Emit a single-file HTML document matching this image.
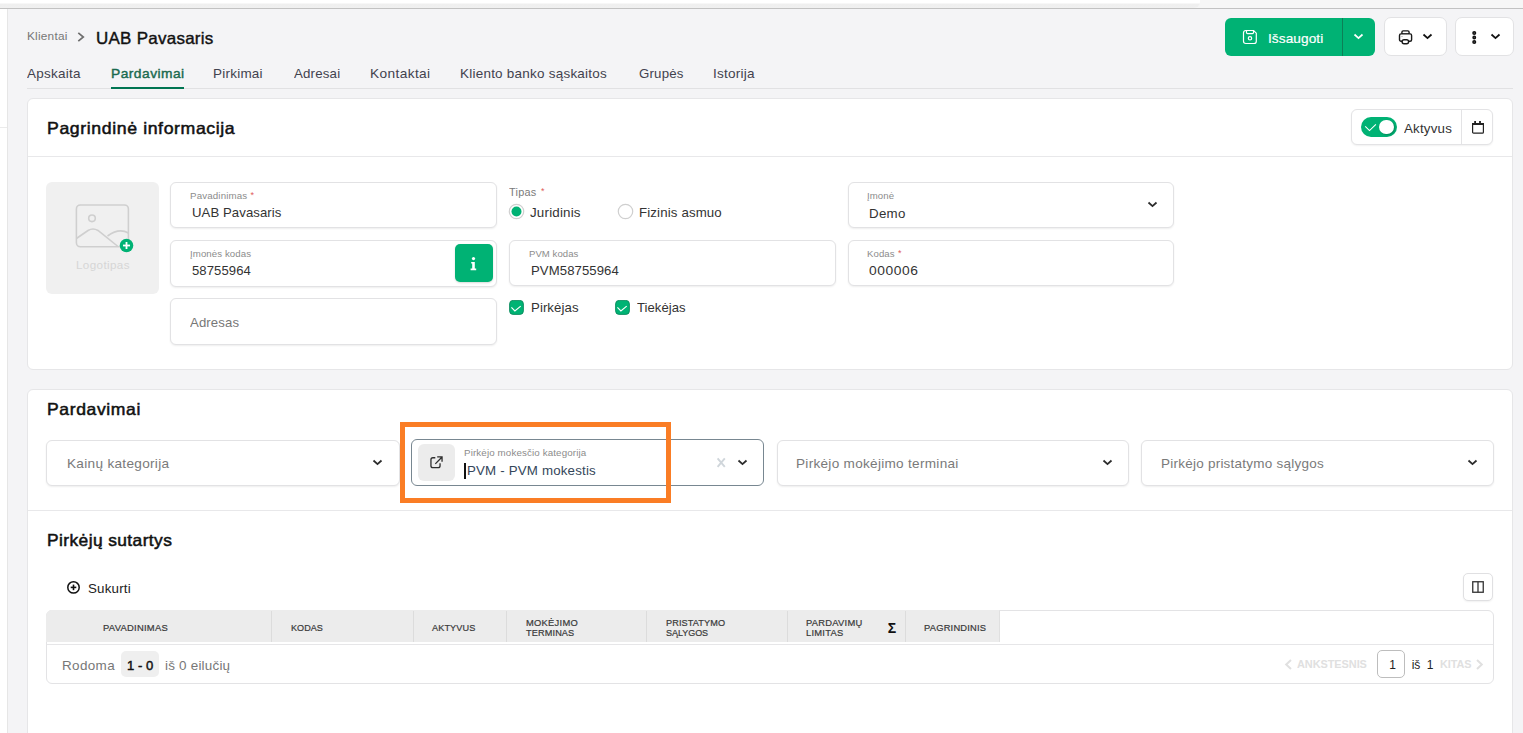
<!DOCTYPE html>
<html><head><meta charset="utf-8"><style>
html,body{margin:0;padding:0;}
body{width:1523px;height:733px;overflow:hidden;position:relative;background:#f4f4f6;font-family:"Liberation Sans", sans-serif;}
.t{position:absolute;white-space:nowrap;}
.b{position:absolute;}
</style></head><body>
<div class="b" style="left:0px;top:0px;width:1523px;height:8px;background:#f6f6f6;"></div>
<div class="b" style="left:0px;top:0px;width:1200px;height:8px;background:linear-gradient(#ffffff 0,#ffffff 3px,#efefef 4px,#f0f0f0 8px);border-bottom-right-radius:6px;"></div>
<div class="b" style="left:0px;top:8px;width:1523px;height:1px;background:#c2c2c2;"></div>
<div class="b" style="left:0px;top:9px;width:7px;height:724px;background:#ffffff;"></div>
<div class="b" style="left:7px;top:9px;width:1px;height:724px;background:#e6e6e6;"></div>
<div class="b" style="left:0px;top:127px;width:7px;height:1px;background:#ebebeb;"></div>
<div class="t" style="left:26.60px;top:31.35px;font-size:11.4px;line-height:11.4px;color:#777;letter-spacing:0.207px;transform:scaleX(1.0388);transform-origin:0 0;">Klientai</div>
<svg class="b" style="left:76px;top:31px;" width="10" height="12" viewBox="0 0 10 12"><polyline points="2.3,1.8 7.3,6 2.3,10.2" fill="none" stroke="#6e6e6e" stroke-width="1.7"/></svg>
<div class="t" style="left:96.10px;top:29.63px;font-size:16.5px;line-height:16.5px;color:#111;letter-spacing:0.260px;transform:scaleX(1.0282);transform-origin:0 0;-webkit-text-stroke:0.4px #111;">UAB Pavasaris</div>
<div class="t" style="left:26.80px;top:67.00px;font-size:13px;line-height:13px;color:#42424e;letter-spacing:0.257px;transform:scaleX(1.0361);transform-origin:0 0;">Apskaita</div>
<div class="t" style="left:111.00px;top:67.00px;font-size:13px;line-height:13px;color:#1a6a4f;letter-spacing:0.439px;transform:scaleX(1.0608);transform-origin:0 0;-webkit-text-stroke:0.4px #1a6a4f;">Pardavimai</div>
<div class="t" style="left:213.00px;top:67.00px;font-size:13px;line-height:13px;color:#42424e;letter-spacing:0.236px;transform:scaleX(1.0357);transform-origin:0 0;">Pirkimai</div>
<div class="t" style="left:293.90px;top:67.00px;font-size:13px;line-height:13px;color:#42424e;letter-spacing:0.167px;transform:scaleX(1.0227);transform-origin:0 0;">Adresai</div>
<div class="t" style="left:370.00px;top:67.00px;font-size:13px;line-height:13px;color:#42424e;letter-spacing:0.362px;transform:scaleX(1.0535);transform-origin:0 0;">Kontaktai</div>
<div class="t" style="left:460.40px;top:67.00px;font-size:13px;line-height:13px;color:#42424e;letter-spacing:0.227px;transform:scaleX(1.0366);transform-origin:0 0;">Kliento banko sąskaitos</div>
<div class="t" style="left:639.00px;top:67.00px;font-size:13px;line-height:13px;color:#42424e;letter-spacing:0.175px;transform:scaleX(1.0205);transform-origin:0 0;">Grupės</div>
<div class="t" style="left:712.80px;top:67.00px;font-size:13px;line-height:13px;color:#42424e;letter-spacing:0.236px;transform:scaleX(1.0431);transform-origin:0 0;">Istorija</div>
<div class="b" style="left:27px;top:88px;width:1486px;height:1px;background:#e1e1e3;"></div>
<div class="b" style="left:111px;top:87px;width:73px;height:2px;background:#007552;"></div>
<div class="b" style="left:1225px;top:18px;width:150px;height:38px;background:#00b274;border-radius:6px;"></div>
<div class="b" style="left:1342px;top:18px;width:1px;height:38px;background:#0d7f57;"></div>
<svg class="b" style="left:1242px;top:29px;" width="16" height="16" viewBox="0 0 16 16"><path d="M3.8 1.5 H11.6 L14.3 4.2 V12.2 Q14.3 14.5 12 14.5 H3.8 Q1.5 14.5 1.5 12.2 V3.8 Q1.5 1.5 3.8 1.5 Z" fill="none" stroke="#fff" stroke-width="1.2"/><path d="M4.5 1.5 V3.5 Q4.5 4.6 5.6 4.6 H10.4 Q11.5 4.6 11.5 3.5 V1.5" fill="none" stroke="#fff" stroke-width="1.2"/><circle cx="8" cy="9.3" r="1.7" fill="none" stroke="#fff" stroke-width="1.2"/></svg>
<div class="t" style="left:1268.30px;top:31.57px;font-size:13.5px;line-height:13.5px;color:#ffffff;letter-spacing:0.072px;transform:scaleX(1.0106);transform-origin:0 0;-webkit-text-stroke:0.2px #fff;">Išsaugoti</div>
<svg class="b" style="left:1353px;top:33px;" width="11" height="8" viewBox="0 0 11 8"><polyline points="1.5,1.5 5.5,5.1 9.5,1.5" fill="none" stroke="#fff" stroke-width="1.7"/></svg>
<div class="b" style="left:1383.5px;top:17.3px;width:63px;height:39.2px;background:#fff;border:1px solid #e2e2e4;border-radius:7px;box-sizing:border-box;"></div>
<svg class="b" style="left:1398px;top:29px;" width="16" height="17" viewBox="0 0 16 17"><rect x="3.9" y="1.9" width="7.2" height="3.4" rx="1.3" fill="none" stroke="#1a1a1a" stroke-width="1.4"/><rect x="1.5" y="4.9" width="12.1" height="7.3" rx="1.5" fill="#fff" stroke="#1a1a1a" stroke-width="1.4"/><rect x="4.1" y="10.7" width="6.5" height="4.1" rx="2" fill="#fff" stroke="#1a1a1a" stroke-width="1.4"/><circle cx="4" cy="7.5" r="0.6" fill="#999"/></svg>
<svg class="b" style="left:1422.3px;top:33px;" width="11" height="8" viewBox="0 0 11 8"><polyline points="1.5,1.5 5.5,5.1 9.5,1.5" fill="none" stroke="#111" stroke-width="1.8"/></svg>
<div class="b" style="left:1454.5px;top:17.3px;width:59px;height:39.2px;background:#fff;border:1px solid #e2e2e4;border-radius:7px;box-sizing:border-box;"></div>
<svg class="b" style="left:1470px;top:30px;" width="8" height="15" viewBox="0 0 8 15"><circle cx="4.25" cy="3" r="1.3" fill="#777" stroke="#111" stroke-width="1.5"/><circle cx="4.25" cy="7.5" r="1.2" fill="#777" stroke="#111" stroke-width="1.5"/><circle cx="4.25" cy="12" r="1.3" fill="#777" stroke="#111" stroke-width="1.5"/></svg>
<svg class="b" style="left:1490.2px;top:33.1px;" width="11" height="8" viewBox="0 0 11 8"><polyline points="1.5,1.5 5.5,5.1 9.5,1.5" fill="none" stroke="#111" stroke-width="1.8"/></svg>
<div class="b" style="left:27px;top:98px;width:1486px;height:272px;background:#fff;border:1px solid #e6e6e8;border-radius:6px;box-sizing:border-box;"></div>
<div class="t" style="left:47.10px;top:120.03px;font-size:16.5px;line-height:16.5px;color:#111;letter-spacing:0.562px;transform:scaleX(1.0723);transform-origin:0 0;-webkit-text-stroke:0.5px #111;">Pagrindinė informacija</div>
<div class="b" style="left:28px;top:156px;width:1484px;height:1px;background:#e8e8ea;"></div>
<div class="b" style="left:1351px;top:109px;width:142px;height:36px;background:#fff;border:1px solid #e3e3e5;border-radius:6px;box-sizing:border-box;box-shadow:0 1px 2px rgba(0,0,0,0.06);"></div>
<div class="b" style="left:1461px;top:109px;width:1px;height:36px;background:#e3e3e5;"></div>
<div class="b" style="left:1361px;top:117px;width:36px;height:20px;background:#00b274;border-radius:10px;"></div>
<div class="b" style="left:1379px;top:119.6px;width:14.8px;height:14.8px;background:#fff;border-radius:50%;box-shadow:1px 1px 2px rgba(0,0,0,0.25);"></div>
<svg class="b" style="left:1363px;top:122px;" width="14" height="10" viewBox="0 0 14 10"><polyline points="2.2,4.3 6.5,8.6 12.9,2.3" fill="none" stroke="#fff" stroke-width="1.1"/></svg>
<div class="t" style="left:1403.70px;top:122.20px;font-size:13px;line-height:13px;color:#333;letter-spacing:0.192px;transform:scaleX(1.0253);transform-origin:0 0;">Aktyvus</div>
<svg class="b" style="left:1471px;top:120px;" width="13" height="15" viewBox="0 0 13 15"><rect x="1.6" y="3.6" width="10.8" height="9.6" rx="1" fill="none" stroke="#222" stroke-width="1.2"/><rect x="1" y="3" width="12" height="2" fill="#222"/><rect x="3.2" y="1" width="1.8" height="2.5" fill="#222"/><rect x="8.1" y="1" width="1.8" height="2.5" fill="#222"/></svg>
<div class="b" style="left:46px;top:182px;width:113px;height:112px;background:#f0f0f0;border-radius:6px;"></div>
<svg class="b" style="left:75px;top:203.6px;" width="56" height="50" viewBox="0 0 56 50"><rect x="1.4" y="1" width="52" height="41.8" rx="4" fill="none" stroke="#cfcfcf" stroke-width="1.6"/><circle cx="17" cy="14.3" r="3.3" fill="none" stroke="#cfcfcf" stroke-width="1.6"/><path d="M1.4 34.5 L13 26.5 Q18 23.5 23 26.5 L43 42.5" fill="none" stroke="#cfcfcf" stroke-width="1.6"/><path d="M32.5 32 Q44 23.5 53.4 29" fill="none" stroke="#cfcfcf" stroke-width="1.6"/></svg>
<svg class="b" style="left:119px;top:238px;" width="15" height="15" viewBox="0 0 15 15"><circle cx="7.5" cy="7.5" r="6.8" fill="#00b274"/><line x1="7.5" y1="4" x2="7.5" y2="11" stroke="#fff" stroke-width="1.8"/><line x1="4" y1="7.5" x2="11" y2="7.5" stroke="#fff" stroke-width="1.8"/></svg>
<div class="t" style="left:75.90px;top:259.69px;font-size:11px;line-height:11px;color:#d6d6d6;letter-spacing:0.350px;transform:scaleX(1.0587);transform-origin:0 0;">Logotipas</div>
<div class="b" style="left:170px;top:182px;width:327px;height:46px;background:#fff;border:1px solid #e2e2e4;border-radius:6px;box-sizing:border-box;box-shadow:0 1px 2px rgba(0,0,0,0.07);"></div>
<div class="b" style="left:170px;top:240px;width:327px;height:46.5px;background:#fff;border:1px solid #e2e2e4;border-radius:6px;box-sizing:border-box;box-shadow:0 1px 2px rgba(0,0,0,0.07);"></div>
<div class="b" style="left:170px;top:298px;width:327px;height:46.5px;background:#fff;border:1px solid #e2e2e4;border-radius:6px;box-sizing:border-box;box-shadow:0 1px 2px rgba(0,0,0,0.07);"></div>
<div class="b" style="left:509px;top:240px;width:327px;height:46px;background:#fff;border:1px solid #e2e2e4;border-radius:6px;box-sizing:border-box;box-shadow:0 1px 2px rgba(0,0,0,0.07);"></div>
<div class="b" style="left:847.5px;top:240px;width:326px;height:46px;background:#fff;border:1px solid #e2e2e4;border-radius:6px;box-sizing:border-box;box-shadow:0 1px 2px rgba(0,0,0,0.07);"></div>
<div class="b" style="left:847.5px;top:182px;width:326px;height:45.5px;background:#fff;border:1px solid #e2e2e4;border-radius:6px;box-sizing:border-box;box-shadow:0 1px 2px rgba(0,0,0,0.07);"></div>
<div class="t" style="left:190.00px;top:191.06px;font-size:9.5px;line-height:9.5px;color:#8c8c8c;letter-spacing:0.140px;transform:scaleX(1.0257);transform-origin:0 0;">Pavadinimas</div>
<div class="t" style="left:250.50px;top:191.38px;font-size:9px;line-height:9px;color:#e05a5a;letter-spacing:0.000px;">*</div>
<div class="t" style="left:192.20px;top:206.00px;font-size:13px;line-height:13px;color:#333;letter-spacing:0.079px;transform:scaleX(1.0109);transform-origin:0 0;">UAB Pavasaris</div>
<div class="t" style="left:190.00px;top:249.26px;font-size:9.5px;line-height:9.5px;color:#8c8c8c;letter-spacing:0.084px;transform:scaleX(1.0156);transform-origin:0 0;">Įmonės kodas</div>
<div class="t" style="left:192.20px;top:264.20px;font-size:13px;line-height:13px;color:#333;letter-spacing:0.068px;transform:scaleX(1.0082);transform-origin:0 0;">58755964</div>
<div class="b" style="left:455px;top:244px;width:38px;height:38px;background:#00b274;border-radius:5px;box-shadow:0 1px 2px rgba(0,0,0,0.15);"></div>
<svg class="b" style="left:468px;top:255.8px;" width="11" height="16" viewBox="0 0 11 16"><circle cx="5.5" cy="2.6" r="1.6" fill="#fff"/><path d="M3.2 6 h3.6 v6.6 h1.4 v1.6 h-5.6 v-1.6 h1.6 v-5 h-1 z" fill="#fff"/></svg>
<div class="t" style="left:190.00px;top:316.00px;font-size:13px;line-height:13px;color:#777;letter-spacing:0.108px;transform:scaleX(1.0136);transform-origin:0 0;">Adresas</div>
<div class="t" style="left:509.20px;top:187.21px;font-size:10.5px;line-height:10.5px;color:#7a7a7a;letter-spacing:0.237px;transform:scaleX(1.0375);transform-origin:0 0;">Tipas</div>
<div class="t" style="left:541.00px;top:187.38px;font-size:9px;line-height:9px;color:#e05a5a;letter-spacing:0.000px;">*</div>
<svg class="b" style="left:508px;top:203px;" width="17" height="17" viewBox="0 0 17 17"><circle cx="8.5" cy="8.5" r="7.2" fill="#fff" stroke="#cfcfcf" stroke-width="1.2"/><circle cx="8.5" cy="8.5" r="5" fill="#00b274"/></svg>
<div class="t" style="left:530.00px;top:206.00px;font-size:13px;line-height:13px;color:#333;letter-spacing:0.175px;transform:scaleX(1.0294);transform-origin:0 0;">Juridinis</div>
<svg class="b" style="left:617px;top:203px;" width="17" height="17" viewBox="0 0 17 17"><circle cx="8.5" cy="8.5" r="7.2" fill="#fff" stroke="#cfcfcf" stroke-width="1.2"/></svg>
<div class="t" style="left:639.30px;top:206.00px;font-size:13px;line-height:13px;color:#333;letter-spacing:0.135px;transform:scaleX(1.0205);transform-origin:0 0;">Fizinis asmuo</div>
<div class="t" style="left:867.00px;top:190.66px;font-size:9.5px;line-height:9.5px;color:#8c8c8c;letter-spacing:0.075px;transform:scaleX(1.0114);transform-origin:0 0;">Įmonė</div>
<div class="t" style="left:869.20px;top:207.20px;font-size:13px;line-height:13px;color:#333;letter-spacing:0.267px;transform:scaleX(1.0231);transform-origin:0 0;">Demo</div>
<svg class="b" style="left:1147px;top:201px;" width="11" height="8" viewBox="0 0 11 8"><polyline points="1.5,1.5 5.5,5.1 9.5,1.5" fill="none" stroke="#2b2b2b" stroke-width="1.8"/></svg>
<div class="t" style="left:528.70px;top:248.76px;font-size:9.5px;line-height:9.5px;color:#8c8c8c;letter-spacing:0.044px;transform:scaleX(1.0072);transform-origin:0 0;">PVM kodas</div>
<div class="t" style="left:530.60px;top:264.20px;font-size:13px;line-height:13px;color:#333;letter-spacing:0.090px;transform:scaleX(1.0105);transform-origin:0 0;">PVM58755964</div>
<div class="t" style="left:867.00px;top:248.76px;font-size:9.5px;line-height:9.5px;color:#8c8c8c;letter-spacing:0.069px;transform:scaleX(1.0102);transform-origin:0 0;">Kodas</div>
<div class="t" style="left:898.00px;top:248.88px;font-size:9px;line-height:9px;color:#e05a5a;letter-spacing:0.000px;">*</div>
<div class="t" style="left:869.20px;top:264.00px;font-size:13px;line-height:13px;color:#333;letter-spacing:0.550px;transform:scaleX(1.0634);transform-origin:0 0;">000006</div>
<svg class="b" style="left:509px;top:300px;" width="15" height="15" viewBox="0 0 15 15"><rect x="0.6" y="0.4" width="13.8" height="14" rx="3.5" fill="#00b374" stroke="#0a8a5c" stroke-width="0.9"/><polyline points="2.4,7.3 5.9,11 11.7,6.1" fill="none" stroke="#fff" stroke-width="1.1"/></svg>
<div class="t" style="left:530.60px;top:301.00px;font-size:13px;line-height:13px;color:#333;letter-spacing:0.089px;transform:scaleX(1.0135);transform-origin:0 0;">Pirkėjas</div>
<svg class="b" style="left:615px;top:300px;" width="15" height="15" viewBox="0 0 15 15"><rect x="0.6" y="0.4" width="13.8" height="14" rx="3.5" fill="#00b374" stroke="#0a8a5c" stroke-width="0.9"/><polyline points="2.4,7.3 5.9,11 11.7,6.1" fill="none" stroke="#fff" stroke-width="1.1"/></svg>
<div class="t" style="left:637.20px;top:301.00px;font-size:13px;line-height:13px;color:#333;letter-spacing:0.043px;transform:scaleX(1.0063);transform-origin:0 0;">Tiekėjas</div>
<div class="b" style="left:27px;top:389px;width:1486px;height:400px;background:#fff;border:1px solid #e6e6e8;border-radius:6px;box-sizing:border-box;"></div>
<div class="t" style="left:47.00px;top:401.03px;font-size:16.5px;line-height:16.5px;color:#111;letter-spacing:0.581px;transform:scaleX(1.0633);transform-origin:0 0;-webkit-text-stroke:0.5px #111;">Pardavimai</div>
<div class="b" style="left:46px;top:439.5px;width:354px;height:46px;background:#fff;border:1px solid #e2e2e4;border-radius:6px;box-sizing:border-box;box-shadow:0 1px 2px rgba(0,0,0,0.07);"></div>
<div class="t" style="left:66.50px;top:457.00px;font-size:13px;line-height:13px;color:#7a7a7a;letter-spacing:0.288px;transform:scaleX(1.0464);transform-origin:0 0;">Kainų kategorija</div>
<svg class="b" style="left:372px;top:459px;" width="11" height="8" viewBox="0 0 11 8"><polyline points="1.5,1.5 5.5,5.1 9.5,1.5" fill="none" stroke="#2b2b2b" stroke-width="1.8"/></svg>
<div class="b" style="left:411px;top:439px;width:353px;height:47px;background:#fff;border:1px solid #788791;border-radius:6px;box-sizing:border-box;"></div>
<div class="b" style="left:417.5px;top:443.5px;width:37.5px;height:37.5px;background:#ececec;border-radius:6px;"></div>
<svg class="b" style="left:428px;top:454px;" width="17" height="17" viewBox="0 0 17 17"><path d="M7.3 3.75 H4.9 Q2.95 3.75 2.95 5.7 V11.7 Q2.95 13.65 4.9 13.65 H10.1 Q12.05 13.65 12.05 11.7 V9.2" fill="none" stroke="#2e2e2e" stroke-width="1.3"/><path d="M9.2 2.95 H14.05 V7.7 M14.05 2.95 L7.3 9.9" fill="none" stroke="#2e2e2e" stroke-width="1.3"/></svg>
<div class="t" style="left:464.30px;top:447.96px;font-size:9.5px;line-height:9.5px;color:#8c8c8c;letter-spacing:0.124px;transform:scaleX(1.0279);transform-origin:0 0;">Pirkėjo mokesčio kategorija</div>
<div class="b" style="left:464px;top:462.5px;width:1.6px;height:16px;background:#111;"></div>
<div class="t" style="left:466.80px;top:464.30px;font-size:13px;line-height:13px;color:#34465a;letter-spacing:0.171px;transform:scaleX(1.0236);transform-origin:0 0;">PVM - PVM mokestis</div>
<svg class="b" style="left:715px;top:456px;" width="12" height="13" viewBox="0 0 12 13"><path d="M2.6 2.3 L9.8 10.9 M9.8 2.3 L2.6 10.9" stroke="#d0d6db" stroke-width="1.9"/></svg>
<svg class="b" style="left:737px;top:458.7px;" width="11" height="8" viewBox="0 0 11 8"><polyline points="1.5,1.5 5.5,5.1 9.5,1.5" fill="none" stroke="#2b2b2b" stroke-width="1.8"/></svg>
<div class="b" style="left:776.5px;top:439.5px;width:352px;height:46px;background:#fff;border:1px solid #e2e2e4;border-radius:6px;box-sizing:border-box;box-shadow:0 1px 2px rgba(0,0,0,0.07);"></div>
<div class="t" style="left:795.50px;top:457.00px;font-size:13px;line-height:13px;color:#7a7a7a;letter-spacing:0.275px;transform:scaleX(1.0444);transform-origin:0 0;">Pirkėjo mokėjimo terminai</div>
<svg class="b" style="left:1102px;top:459px;" width="11" height="8" viewBox="0 0 11 8"><polyline points="1.5,1.5 5.5,5.1 9.5,1.5" fill="none" stroke="#2b2b2b" stroke-width="1.8"/></svg>
<div class="b" style="left:1140.5px;top:439.5px;width:353px;height:46px;background:#fff;border:1px solid #e2e2e4;border-radius:6px;box-sizing:border-box;box-shadow:0 1px 2px rgba(0,0,0,0.07);"></div>
<div class="t" style="left:1160.50px;top:456.70px;font-size:13px;line-height:13px;color:#7a7a7a;letter-spacing:0.230px;transform:scaleX(1.0381);transform-origin:0 0;">Pirkėjo pristatymo sąlygos</div>
<svg class="b" style="left:1466.5px;top:459px;" width="11" height="8" viewBox="0 0 11 8"><polyline points="1.5,1.5 5.5,5.1 9.5,1.5" fill="none" stroke="#2b2b2b" stroke-width="1.8"/></svg>
<div class="b" style="left:400px;top:422px;width:271px;height:81px;border:5px solid #fa7d25;box-sizing:border-box;"></div>
<div class="b" style="left:28px;top:510px;width:1484px;height:1px;background:#e8e8ea;"></div>
<div class="t" style="left:47.00px;top:532.03px;font-size:16.5px;line-height:16.5px;color:#111;letter-spacing:0.393px;transform:scaleX(1.0523);transform-origin:0 0;-webkit-text-stroke:0.5px #111;">Pirkėjų sutartys</div>
<svg class="b" style="left:66px;top:580px;" width="15" height="15" viewBox="0 0 15 15"><circle cx="7.5" cy="7.4" r="5.7" fill="none" stroke="#111" stroke-width="1.5"/><line x1="7.5" y1="4.6" x2="7.5" y2="10.2" stroke="#111" stroke-width="1.6"/><line x1="4.7" y1="7.4" x2="10.3" y2="7.4" stroke="#111" stroke-width="1.6"/></svg>
<div class="t" style="left:87.80px;top:581.80px;font-size:13px;line-height:13px;color:#222;letter-spacing:0.179px;transform:scaleX(1.0266);transform-origin:0 0;">Sukurti</div>
<div class="b" style="left:1463px;top:573px;width:29.5px;height:27.5px;background:#fff;border:1px solid #e0e0e2;border-radius:5px;box-sizing:border-box;box-shadow:0 1px 2px rgba(0,0,0,0.06);"></div>
<svg class="b" style="left:1472px;top:581px;" width="12" height="12" viewBox="0 0 12 12"><rect x="0.75" y="0.75" width="10.5" height="10.5" fill="none" stroke="#333" stroke-width="1.3"/><line x1="6" y1="0.75" x2="6" y2="11.25" stroke="#333" stroke-width="1.3"/></svg>
<div class="b" style="left:46px;top:609.8px;width:1447.5px;height:74px;background:#fff;border:1px solid #e3e3e5;border-radius:6px;box-sizing:border-box;"></div>
<div class="b" style="left:46px;top:609.8px;width:953px;height:32.5px;background:#ececec;border-top-left-radius:6px;"></div>
<div class="b" style="left:47px;top:644px;width:1445.5px;height:1px;background:#e6e6e8;"></div>
<div class="b" style="left:271px;top:610.8px;width:1px;height:31.5px;background:#dcdcdc;"></div>
<div class="b" style="left:412.5px;top:610.8px;width:1px;height:31.5px;background:#dcdcdc;"></div>
<div class="b" style="left:505.5px;top:610.8px;width:1px;height:31.5px;background:#dcdcdc;"></div>
<div class="b" style="left:646px;top:610.8px;width:1px;height:31.5px;background:#dcdcdc;"></div>
<div class="b" style="left:787px;top:610.8px;width:1px;height:31.5px;background:#dcdcdc;"></div>
<div class="b" style="left:904.5px;top:610.8px;width:1px;height:31.5px;background:#dcdcdc;"></div>
<div class="b" style="left:998.5px;top:610.8px;width:1px;height:31.5px;background:#e0e0e0;"></div>
<div class="t" style="left:103.40px;top:623.58px;font-size:9px;line-height:9px;color:#3a3a3a;letter-spacing:0.255px;transform:scaleX(1.0429);transform-origin:0 0;-webkit-text-stroke:0.2px #3a3a3a;">PAVADINIMAS</div>
<div class="t" style="left:291.10px;top:623.58px;font-size:9px;line-height:9px;color:#3a3a3a;letter-spacing:0.050px;transform:scaleX(1.0063);transform-origin:0 0;-webkit-text-stroke:0.2px #3a3a3a;">KODAS</div>
<div class="t" style="left:431.70px;top:623.58px;font-size:9px;line-height:9px;color:#3a3a3a;letter-spacing:0.108px;transform:scaleX(1.0155);transform-origin:0 0;-webkit-text-stroke:0.2px #3a3a3a;">AKTYVUS</div>
<div class="t" style="left:525.80px;top:618.68px;font-size:9px;line-height:9px;color:#3a3a3a;letter-spacing:0.264px;transform:scaleX(1.0385);transform-origin:0 0;-webkit-text-stroke:0.2px #3a3a3a;">MOKĖJIMO</div>
<div class="t" style="left:525.80px;top:629.18px;font-size:9px;line-height:9px;color:#3a3a3a;letter-spacing:0.121px;transform:scaleX(1.0183);transform-origin:0 0;-webkit-text-stroke:0.2px #3a3a3a;">TERMINAS</div>
<div class="t" style="left:666.40px;top:618.68px;font-size:9px;line-height:9px;color:#3a3a3a;letter-spacing:0.108px;transform:scaleX(1.0171);transform-origin:0 0;-webkit-text-stroke:0.2px #3a3a3a;">PRISTATYMO</div>
<div class="t" style="left:666.40px;top:629.18px;font-size:9px;line-height:9px;color:#3a3a3a;letter-spacing:-0.021px;transform:scaleX(0.9970);transform-origin:0 0;-webkit-text-stroke:0.2px #3a3a3a;">SĄLYGOS</div>
<div class="t" style="left:806.40px;top:618.68px;font-size:9px;line-height:9px;color:#3a3a3a;letter-spacing:0.247px;transform:scaleX(1.0379);transform-origin:0 0;-webkit-text-stroke:0.2px #3a3a3a;">PARDAVIMŲ</div>
<div class="t" style="left:806.40px;top:629.18px;font-size:9px;line-height:9px;color:#3a3a3a;letter-spacing:0.229px;transform:scaleX(1.0400);transform-origin:0 0;-webkit-text-stroke:0.2px #3a3a3a;">LIMITAS</div>
<div class="t" style="left:887.80px;top:620.65px;font-size:14px;line-height:14px;color:#111;letter-spacing:0.000px;font-weight:bold;">Σ</div>
<div class="t" style="left:923.60px;top:623.58px;font-size:9px;line-height:9px;color:#3a3a3a;letter-spacing:0.207px;transform:scaleX(1.0359);transform-origin:0 0;-webkit-text-stroke:0.2px #3a3a3a;">PAGRINDINIS</div>
<div class="t" style="left:62.30px;top:659.00px;font-size:13px;line-height:13px;color:#777;letter-spacing:0.345px;transform:scaleX(1.0351);transform-origin:0 0;">Rodoma</div>
<div class="b" style="left:121px;top:651px;width:37.5px;height:25.5px;background:#efefef;border-radius:5px;"></div>
<div class="t" style="left:127.00px;top:659.00px;font-size:13px;line-height:13px;color:#111;letter-spacing:0.038px;transform:scaleX(1.0058);transform-origin:0 0;-webkit-text-stroke:0.45px #111;">1 - 0</div>
<div class="t" style="left:165.40px;top:659.00px;font-size:13px;line-height:13px;color:#777;letter-spacing:0.195px;transform:scaleX(1.0354);transform-origin:0 0;">iš 0 eilučių</div>
<svg class="b" style="left:1284px;top:659px;" width="9" height="11" viewBox="0 0 9 11"><polyline points="7,1 2.2,5.5 7,10" fill="none" stroke="#e0e0e0" stroke-width="2"/></svg>
<div class="t" style="left:1297.20px;top:658.69px;font-size:11px;line-height:11px;color:#e0e0e0;letter-spacing:-0.056px;transform:scaleX(0.9929);transform-origin:0 0;font-weight:bold;">ANKSTESNIS</div>
<div class="b" style="left:1377px;top:650px;width:27.5px;height:27.5px;background:#fff;border:1px solid #bdbdbd;border-radius:5px;box-sizing:border-box;"></div>
<div class="t" style="left:1389.30px;top:659.34px;font-size:12px;line-height:12px;color:#222;letter-spacing:0.000px;">1</div>
<div class="t" style="left:1411.70px;top:659.34px;font-size:12px;line-height:12px;color:#222;letter-spacing:-0.050px;">iš</div>
<div class="t" style="left:1426.80px;top:659.34px;font-size:12px;line-height:12px;color:#222;letter-spacing:0.000px;">1</div>
<div class="t" style="left:1440.00px;top:658.69px;font-size:11px;line-height:11px;color:#e0e0e0;letter-spacing:-0.100px;transform:scaleX(0.9876);transform-origin:0 0;font-weight:bold;">KITAS</div>
<svg class="b" style="left:1475px;top:659px;" width="9" height="11" viewBox="0 0 9 11"><polyline points="2,1 6.8,5.5 2,10" fill="none" stroke="#e0e0e0" stroke-width="2"/></svg>
</body></html>
